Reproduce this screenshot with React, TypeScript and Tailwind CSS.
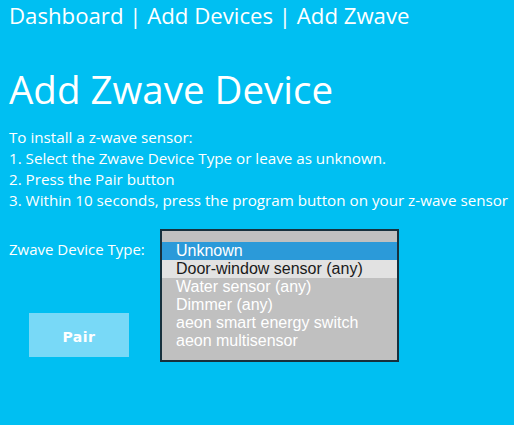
import React from "react";

const deviceTypes = [
  "Unknown",
  "Door-window sensor (any)",
  "Water sensor (any)",
  "Dimmer (any)",
  "aeon smart energy switch",
  "aeon multisensor",
];

function DeviceTypeList() {
  return (
    <div className="w-[239px] border-2 border-[#17303d] bg-[#c0c0c0] pt-[11px] pb-[10px] font-['Liberation_Sans',Arial,sans-serif] text-[16px] leading-[18px]">
      {deviceTypes.map((t, i) => (
        <div
          key={t}
          className={
            i === 0
              ? "bg-[#2b9ad9] pl-[14px] text-white"
              : i === 1
                ? "bg-[#e2e2e2] pl-[14px] text-[#1a1a1a]"
                : "pl-[14px] text-white"
          }
        >
          {t}
        </div>
      ))}
    </div>
  );
}

export default function App() {
  return (
    <div className="h-[425px] w-[514px] overflow-hidden bg-[#00bff2] pl-[9px] text-white font-['Open_Sans','Noto_Sans',sans-serif]">
      <div className="pt-[1px] text-[22.2px] leading-[30px]">
        Dashboard | Add Devices | Add Zwave
      </div>
      <h1 className="mt-[34px] text-[38.5px] leading-[48px]">Add Zwave Device</h1>
      <div className="mt-[14px] text-[15.2px] leading-[21px]">
        <p>To install a z-wave sensor:</p>
        <p>1. Select the Zwave Device Type or leave as unknown.</p>
        <p>2. Press the Pair button</p>
        <p>3. Within 10 seconds, press the program button on your z-wave sensor</p>
      </div>
      <div className="mt-[18px] flex items-start">
        <div className="w-[151px] pl-0">
          <div className="pt-[10px] text-[15px] leading-[21px]">Zwave Device Type:</div>
          <button className="ml-[20px] mt-[53px] flex h-[44px] w-[100px] items-center justify-center bg-[#78d9f7] pt-[4px] font-['DejaVu_Sans',sans-serif] text-[14px] font-bold tracking-[0.5px] text-white">
            Pair
          </button>
        </div>
        <DeviceTypeList />
      </div>
    </div>
  );
}
